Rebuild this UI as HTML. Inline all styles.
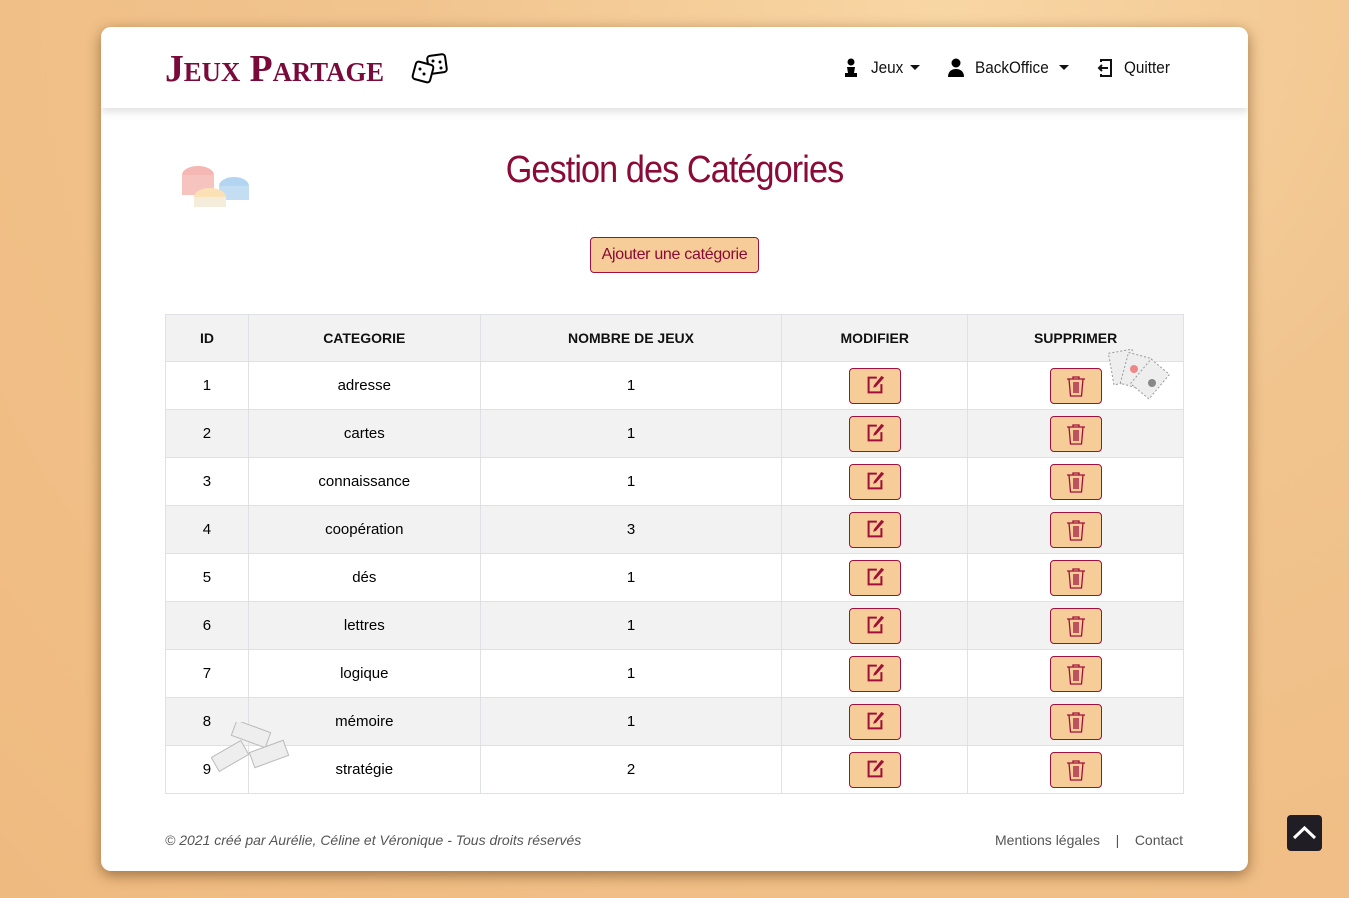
<!DOCTYPE html>
<html><head><meta charset="utf-8">
<style>
*{box-sizing:border-box;margin:0;padding:0}
body{width:1349px;height:898px;overflow:hidden;font-family:"Liberation Sans",sans-serif;
background:radial-gradient(ellipse at 70% 0%,#f8d6a4 0%,#f1c48e 40%,#efba80 100%);position:relative}
.card{position:absolute;left:101px;top:27px;width:1147px;height:844px;background:#fff;border-radius:10px;box-shadow:0 4px 14px rgba(90,50,10,.55);overflow:hidden}
.hdr{position:absolute;left:0;top:0;width:100%;height:81px;background:#fff;box-shadow:0 4px 8px rgba(0,0,0,.12)}
.logo{position:absolute;left:64px;top:20px;font-family:"Liberation Serif",serif;font-size:38px;color:#7a0a3a;font-variant:small-caps;font-weight:bold;line-height:44px;transform:scaleX(.99);transform-origin:left}
.nav{position:absolute;top:31px;font-size:17px;color:#111;display:flex;align-items:center;white-space:nowrap}
.nav span.t{display:inline-block;transform:scaleX(.9);transform-origin:left}
.caret{position:absolute;border-left:5px solid transparent;border-right:5px solid transparent;border-top:5px solid #111}
h1{position:absolute;left:0;width:100%;text-align:center;top:122px;font-weight:normal;font-size:38px;color:#8b0a36;letter-spacing:-1px;transform:scaleX(.9)}
.add{position:absolute;left:489px;top:210px;width:169px;height:36px;border:1px solid #a0103c;background:#f6cc98;border-radius:4px;color:#8b0a36;font-size:16px;text-align:center;line-height:34px;letter-spacing:-.3px}
table{position:absolute;left:64px;top:287px;border-collapse:collapse;width:1019px;font-size:15px}
td,th{border:1px solid #dee2e6;text-align:center;height:48px;padding:0}
th{height:47px;background:#f2f2f2;font-size:14px;font-weight:bold;color:#111}
tr:nth-child(odd) td{background:#f2f2f2}
.b{display:inline-block;width:52px;height:36px;border:1px solid #a0103c;border-radius:4px;background:#f6cc98;vertical-align:middle;padding-top:5px}
.foot{position:absolute;top:805px;font-size:14px;color:#555}
.top{position:absolute;left:1287px;top:815px;width:35px;height:36px;background:#211d24;border-radius:4px}
</style></head><body>
<div class="card">
 <div class="hdr">
  <div class="logo">Jeux Partage</div>
  <svg style="position:absolute;left:310px;top:26px" width="40" height="32" viewBox="0 0 40 32"><g fill="#fff" stroke="#000" stroke-width="2"><rect x="17" y="2" width="18" height="18" rx="3" transform="rotate(-8 26 11)"/><rect x="3" y="10" width="18" height="18" rx="3" transform="rotate(15 12 19)"/></g><g fill="#000"><circle cx="22" cy="8" r="1.5"/><circle cx="30" cy="15" r="1.5"/><circle cx="29" cy="9" r="1.5"/><circle cx="9" cy="16" r="1.5"/><circle cx="13" cy="21" r="1.5"/></g></svg>
  <div class="nav" style="left:742px"><svg width="16" height="20" viewBox="0 0 16 20"><circle cx="8" cy="4" r="3.5"/><path d="M4 9h8l-1 6h3v4H2v-4h3z"/></svg></div>
  <div class="nav" style="left:770px"><span class="t">Jeux</span></div><div class="caret" style="left:809px;top:38px"></div>
  <div class="nav" style="left:846px"><svg width="18" height="20" viewBox="0 0 18 20"><circle cx="9" cy="5" r="4.5"/><path d="M1 19c0-6 4-8 8-8s8 2 8 8z"/></svg></div>
  <div class="nav" style="left:874px"><span class="t">BackOffice</span></div><div class="caret" style="left:958px;top:38px"></div>
  <div class="nav" style="left:995px"><svg width="18" height="20" viewBox="0 0 18 20" fill="none" stroke="#111" stroke-width="2"><path d="M5 4V2h10v16H5v-2"/><path d="M12 10H3M6 7l-3 3 3 3"/></svg></div>
  <div class="nav" style="left:1023px"><span class="t">Quitter</span></div>
 </div>
 <svg style="position:absolute;left:79px;top:130px" width="70" height="56"><g opacity=".75"><ellipse cx="18" cy="18" rx="16" ry="9" fill="#f2a09a"/><rect x="2" y="18" width="32" height="20" fill="#f4b0aa"/><ellipse cx="54" cy="29" rx="15" ry="9" fill="#9cc8ee"/><rect x="39" y="29" width="30" height="14" fill="#b0d4f0"/><ellipse cx="30" cy="40" rx="16" ry="9" fill="#fbd8a0"/><rect x="14" y="40" width="32" height="10" fill="#f4e6d0"/></g></svg>
 <h1>Gestion des Catégories</h1>
 <div class="add">Ajouter une catégorie</div>
 <table>
  <colgroup><col style="width:83px"><col style="width:232px"><col style="width:302px"><col style="width:186px"><col style="width:216px"></colgroup>
  <tr><th>ID</th><th>CATEGORIE</th><th>NOMBRE DE JEUX</th><th>MODIFIER</th><th>SUPPRIMER</th></tr>
  <tr><td>1</td><td>adresse</td><td>1</td><td><span class="b e"></span></td><td><span class="b d"></span></td></tr>
  <tr><td>2</td><td>cartes</td><td>1</td><td><span class="b e"></span></td><td><span class="b d"></span></td></tr>
  <tr><td>3</td><td>connaissance</td><td>1</td><td><span class="b e"></span></td><td><span class="b d"></span></td></tr>
  <tr><td>4</td><td>coopération</td><td>3</td><td><span class="b e"></span></td><td><span class="b d"></span></td></tr>
  <tr><td>5</td><td>dés</td><td>1</td><td><span class="b e"></span></td><td><span class="b d"></span></td></tr>
  <tr><td>6</td><td>lettres</td><td>1</td><td><span class="b e"></span></td><td><span class="b d"></span></td></tr>
  <tr><td>7</td><td>logique</td><td>1</td><td><span class="b e"></span></td><td><span class="b d"></span></td></tr>
  <tr><td>8</td><td>mémoire</td><td>1</td><td><span class="b e"></span></td><td><span class="b d"></span></td></tr>
  <tr><td>9</td><td>stratégie</td><td>2</td><td><span class="b e"></span></td><td><span class="b d"></span></td></tr>
 </table>
 <svg style="position:absolute;left:1005px;top:322px" width="70" height="60"><g fill="#eee" stroke="#999" stroke-dasharray="2 2"><rect x="5" y="2" width="24" height="32" transform="rotate(-10 17 18)"/><rect x="18" y="6" width="24" height="32" transform="rotate(15 30 22)"/><rect x="32" y="14" width="24" height="32" transform="rotate(40 44 30)"/></g><circle cx="28" cy="20" r="4" fill="#e88"/><circle cx="46" cy="34" r="4" fill="#888"/></svg>
 <svg style="position:absolute;left:110px;top:695px" width="80" height="50"><g fill="#eee" stroke="#bbb"><rect x="22" y="4" width="36" height="16" transform="rotate(20 40 12)"/><rect x="2" y="26" width="34" height="16" transform="rotate(-30 19 34)"/><rect x="40" y="24" width="36" height="16" transform="rotate(-20 58 32)"/></g></svg>
 <div class="foot" style="left:64px;font-style:italic">© 2021 créé par Aurélie, Céline et Véronique - Tous droits réservés</div>
 <div class="foot" style="left:894px">Mentions légales &nbsp;&nbsp;&nbsp;|&nbsp;&nbsp;&nbsp; Contact</div>
</div>
<div class="top"><svg width="35" height="36" viewBox="0 0 35 36"><path d="M7 23l10.5-10 10.5 10" fill="none" stroke="#fff" stroke-width="3"/></svg></div>
<svg width="0" height="0" style="position:absolute"><defs>
<symbol id="ed" viewBox="0 0 24 24"><path d="M14 4H5v16h14v-9" fill="none" stroke="#a0103c" stroke-width="2.2"/><path d="M19 2l3 2-9 10-3 1 1-3z" fill="#a0103c"/></symbol>
<symbol id="tr" viewBox="0 0 24 24"><g fill="none" stroke="#a0103c" stroke-width="1.3"><path d="M3 5h18M9 5V3h6v2M5 5l1.5 17h11L19 5M10 8v11M12 8v11M14 8v11"/></g></symbol>
</defs></svg>
<script>
document.querySelectorAll('.e').forEach(e=>e.innerHTML='<svg width="22" height="22"><use href="#ed"/></svg>');
document.querySelectorAll('.d').forEach(e=>e.innerHTML='<svg width="24" height="24"><use href="#tr"/></svg>');
</script>
</body></html>
